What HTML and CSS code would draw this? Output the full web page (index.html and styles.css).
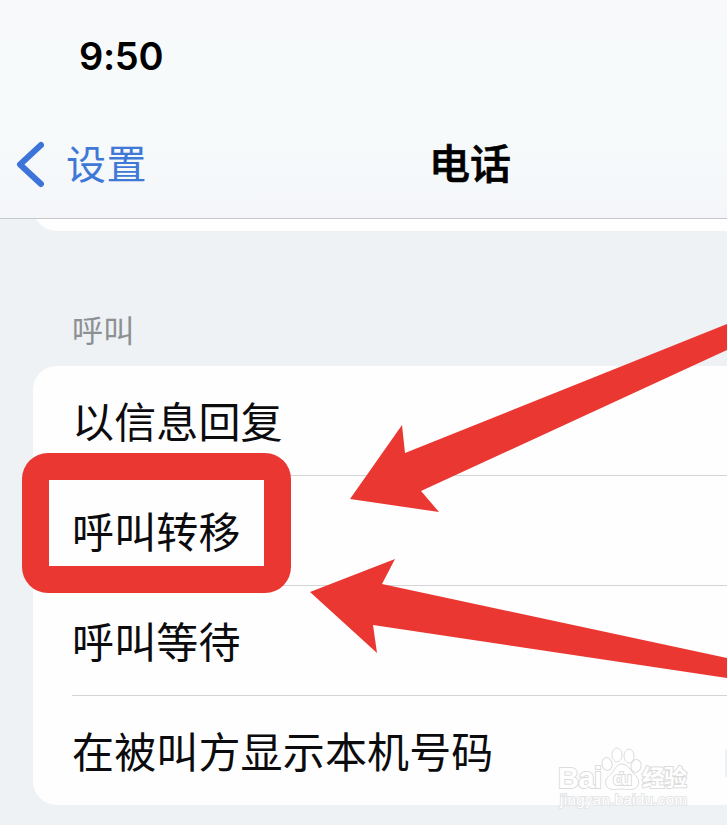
FILE: index.html
```
<!DOCTYPE html>
<html lang="zh-CN">
<head>
    <meta charset="UTF-8">
    <meta name="viewport" content="width=device-width, initial-scale=1.0">
    <title>电话</title>
    <link rel="stylesheet" href="styles.css">
</head>
<body>
    <div class="screen">
        <header class="header">
            <div class="time">9:50</div>
            <nav class="nav">
                <a class="back">
                    <svg class="chevron" width="30" height="50" viewBox="0 0 30 50">
                        <path d="M27 7 L6 26.500 L27 46" />
                    </svg>
                    <span>设置</span>
                </a>
                <h1>电话</h1>
            </nav>
        </header>

        <main>
            <div class="card card-top"></div>
            <h2>呼叫</h2>
            <ul class="card list">
                <li>以信息回复</li>
                <li>呼叫转移</li>
                <li>呼叫等待</li>
                <li>在被叫方显示本机号码</li>
            </ul>
        </main>

        <!-- Highlight box and arrows -->
        <div class="highlight"></div>
        <svg class="arrows" width="727" height="825" viewBox="0 0 727 825">
            <polygon points="350,499 402,425 405,453 727,324 727,350 421,491 439,512" />
            <polygon points="310,592 395,559 382,584 727,658 727,678 373,625 377,653" />
        </svg>

        <!-- Watermark -->
        <svg class="watermark" width="150" height="70" viewBox="0 0 150 70">
            <text class="brand" x="5" y="42" textLength="44">Bai</text>
            <ellipse cx="54" cy="18" rx="5" ry="6.5" transform="rotate(-12 54 18)" />
            <ellipse cx="64" cy="9" rx="5" ry="7" />
            <ellipse cx="76" cy="10" rx="5" ry="7" />
            <ellipse cx="83" cy="20" rx="5" ry="6.5" transform="rotate(12 83 20)" />
            <path d="M69 18 C75 18 77 24 81 28 C86 32 87 37 84 41 C80 45 75 43 69 43 C63 43 58 45 54 41 C51 36 53 32 58 28 C62 24 63 18 69 18 Z" />
            <text class="du" x="60" y="39" textLength="19">du</text>
            <text class="cn" x="89" y="40" textLength="45">经验</text>
            <text class="url" x="7" y="59" textLength="127">jingyan.baidu.com</text>
        </svg>
        <div class="switch-edge"></div>
    </div>
</body>
</html>
```

FILE: styles.css
```
* {
    box-sizing: border-box;
}
body {
    margin: 0;
    font-family: "Noto Sans CJK SC", sans-serif;
    background: #eef2f5;
    color: #0c0c0e;
}
.screen {
    position: relative;
    width: 727px;
    height: 825px;
    overflow: hidden;
}
.header {
    position: relative;
    z-index: 1;
    height: 219px;
    padding-top: 32px;
    background: linear-gradient(#f7f9fa, #f7fafb 60%, #f4f6f9);
    border-bottom: 1px solid #c6c8cb;
}
.time {
    height: 48px;
    padding-left: 79px;
    font-family: Inter, sans-serif;
    font-size: 38px;
    font-weight: 600;
    line-height: 49px;
    letter-spacing: -0.3px;
    color: #000;
}
.nav {
    display: grid;
    grid-template-columns: 429px 1fr;
    align-items: center;
    height: 60px;
    margin-top: 53px;
}
.back {
    display: flex;
    align-items: center;
    padding-left: 14px;
    font-size: 40px;
    line-height: 60px;
    color: #3f78d6;
}
.back span {
    margin: -2px 0 0 22px;
    letter-spacing: 0.4px;
}
.chevron {
    fill: none;
    stroke: #3c74da;
    stroke-width: 6;
    stroke-linecap: round;
    stroke-linejoin: round;
}
h1 {
    margin: -4px 0 0;
    font-size: 41px;
    font-weight: 500;
    line-height: 60px;
    color: #000;
    -webkit-text-stroke: 0.7px #000;
}
.card {
    margin-left: 33px;
    background: #fefefe;
}
/* upper half sits under the header */
.card-top {
    height: 26px;
    margin-top: -14px;
    border-radius: 0 0 0 24px;
}
h2 {
    height: 135px;
    margin: 0;
    padding: 75px 0 0 72px;
    font-size: 31px;
    font-weight: 400;
    line-height: 46px;
    letter-spacing: 0.3px;
    color: #8d9093;
}
.list {
    height: 439px;
    margin-top: 0;
    margin-bottom: 0;
    padding: 0 0 0 39px;
    border-radius: 24px 0 0 24px;
    list-style: none;
}
.list li {
    height: 110px;
    border-bottom: 1px solid #d2d4d5;
    font-size: 42px;
    line-height: 107px;
    letter-spacing: 0.15px;
}
.list li:last-child {
    border-bottom: none;
}
.highlight {
    position: absolute;
    top: 453px;
    left: 22px;
    width: 269px;
    height: 140px;
    border: 27px solid #ea3732;
    border-radius: 26px;
}
.arrows {
    position: absolute;
    z-index: 1;
    top: 0;
    left: 0;
    fill: #ea3732;
}
.watermark {
    position: absolute;
    top: 746px;
    left: 553px;
    fill: #fff;
    stroke: #dcdcdc;
    stroke-width: 1;
}
.watermark text {
    font-family: "Liberation Sans", "Noto Sans CJK SC", sans-serif;
    font-weight: bold;
    stroke-width: 2;
    paint-order: stroke;
}
.watermark .brand {
    font-size: 29px;
}
.watermark .du {
    font-size: 18px;
}
.watermark .cn {
    font-size: 23px;
}
.watermark .url {
    font-size: 15px;
    font-weight: normal;
    stroke: #e3e5e6;
}
.switch-edge {
    position: absolute;
    top: 749px;
    left: 725px;
    width: 2px;
    height: 28px;
    background: #edf1f1;
}
```
